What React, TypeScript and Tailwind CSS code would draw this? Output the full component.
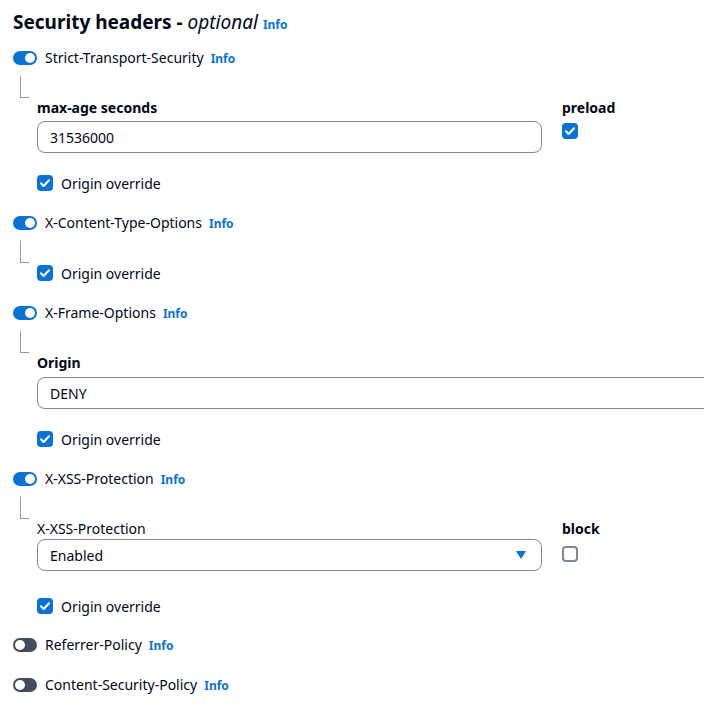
import React from 'react';

const font = { fontFamily: '"Noto Sans", "Open Sans", sans-serif' };

function Toggle({ on }: { on: boolean }) {
  return (
    <span
      className={`relative inline-flex h-[14px] w-[24px] shrink-0 items-center rounded-full ${
        on ? 'bg-[#0972d3]' : 'bg-[#414d5c]'
      }`}
    >
      <span
        className={`absolute top-[2px] h-[10px] w-[10px] rounded-full bg-white ${on ? 'left-[12px]' : 'left-[2px]'}`}
      />
    </span>
  );
}

function Checkbox({ checked }: { checked: boolean }) {
  if (!checked) {
    return <span className="block h-4 w-4 shrink-0 rounded-[4px] border-2 border-[#7d8998] bg-white" />;
  }
  return (
    <span className="flex h-4 w-4 shrink-0 items-center justify-center rounded-[4px] bg-[#0972d3]">
      <svg viewBox="0 0 16 16" className="h-4 w-4" fill="none">
        <path d="M4 8.3l2.6 2.7L12 5.2" stroke="white" strokeWidth={2} strokeLinecap="round" strokeLinejoin="round" />
      </svg>
    </span>
  );
}

function HeaderRow({ label, on }: { label: string; on: boolean }) {
  return (
    <div className="flex h-5 items-center">
      <Toggle on={on} />
      <span className="ml-2 flex items-baseline leading-5">
        <span className="text-[14px] text-[#000716]">{label}</span>
        <span className="ml-[7px] text-[12px] font-bold text-[#0972d3]">Info</span>
      </span>
    </div>
  );
}

function Elbow() {
  return <div className="ml-[7px] mt-2 h-[22px] w-[9px] border-b border-l border-[#8d99a8]" />;
}

function OriginOverride({ className = '' }: { className?: string }) {
  return (
    <div className={`flex h-5 items-center gap-2 ${className}`}>
      <Checkbox checked />
      <span className="text-[14px] text-[#000716]">Origin override</span>
    </div>
  );
}

export default function App() {
  return (
    <div className="h-[709px] w-[704px] overflow-hidden bg-white pl-[13px] pt-2 text-[#000716]" style={font}>
      <h2 className="h-7 text-[19px] font-bold leading-7">
        Security headers - <span className="font-normal italic">optional</span>
        <span className="ml-[5px] text-[12px] font-bold text-[#0972d3]">Info</span>
      </h2>

      {/* Strict-Transport-Security */}
      <div className="mt-3">
        <HeaderRow label="Strict-Transport-Security" on />
        <Elbow />
        <div className="pl-[24px]">
          <div className="flex gap-[20px]">
            <div className="w-[505px]">
              <div className="h-5 text-[14px] font-bold leading-5">max-age seconds</div>
              <div className="mt-[3px] flex h-8 items-center rounded-lg border border-[#7d8998] px-3 text-[14px]">
                31536000
              </div>
            </div>
            <div>
              <div className="h-5 text-[14px] font-bold leading-5">preload</div>
              <div className="mt-[5px]">
                <Checkbox checked />
              </div>
            </div>
          </div>
          <OriginOverride className="mt-5" />
        </div>
      </div>

      {/* X-Content-Type-Options */}
      <div className="mt-5">
        <HeaderRow label="X-Content-Type-Options" on />
        <Elbow />
        <div className="pl-[24px]">
          <OriginOverride />
        </div>
      </div>

      {/* X-Frame-Options */}
      <div className="mt-5">
        <HeaderRow label="X-Frame-Options" on />
        <Elbow />
        <div className="pl-[24px]">
          <div className="h-5 text-[14px] font-bold leading-5">Origin</div>
          <div className="mt-1 flex h-8 w-[720px] items-center rounded-lg border border-[#7d8998] px-3 text-[14px]">
            DENY
          </div>
          <OriginOverride className="mt-5" />
        </div>
      </div>

      {/* X-XSS-Protection */}
      <div className="mt-5">
        <HeaderRow label="X-XSS-Protection" on />
        <Elbow />
        <div className="pl-[24px]">
          <div className="flex gap-[20px]">
            <div className="w-[505px]">
              <div className="h-5 text-[14px] leading-5">X-XSS-Protection</div>
              <div className="flex h-8 items-center justify-between rounded-lg border border-[#7d8998] pl-3 pr-[15px] text-[14px]">
                <span>Enabled</span>
                <svg viewBox="0 0 10 8" className="h-[8px] w-[10px]">
                  <path d="M0 0h10L5 8z" fill="#0972d3" />
                </svg>
              </div>
            </div>
            <div>
              <div className="h-5 text-[14px] font-bold leading-5">block</div>
              <div className="mt-[7px]">
                <Checkbox checked={false} />
              </div>
            </div>
          </div>
          <OriginOverride className="mt-[25px]" />
        </div>
      </div>

      <div className="mt-[19px]">
        <HeaderRow label="Referrer-Policy" on={false} />
      </div>
      <div className="mt-5">
        <HeaderRow label="Content-Security-Policy" on={false} />
      </div>
    </div>
  );
}
